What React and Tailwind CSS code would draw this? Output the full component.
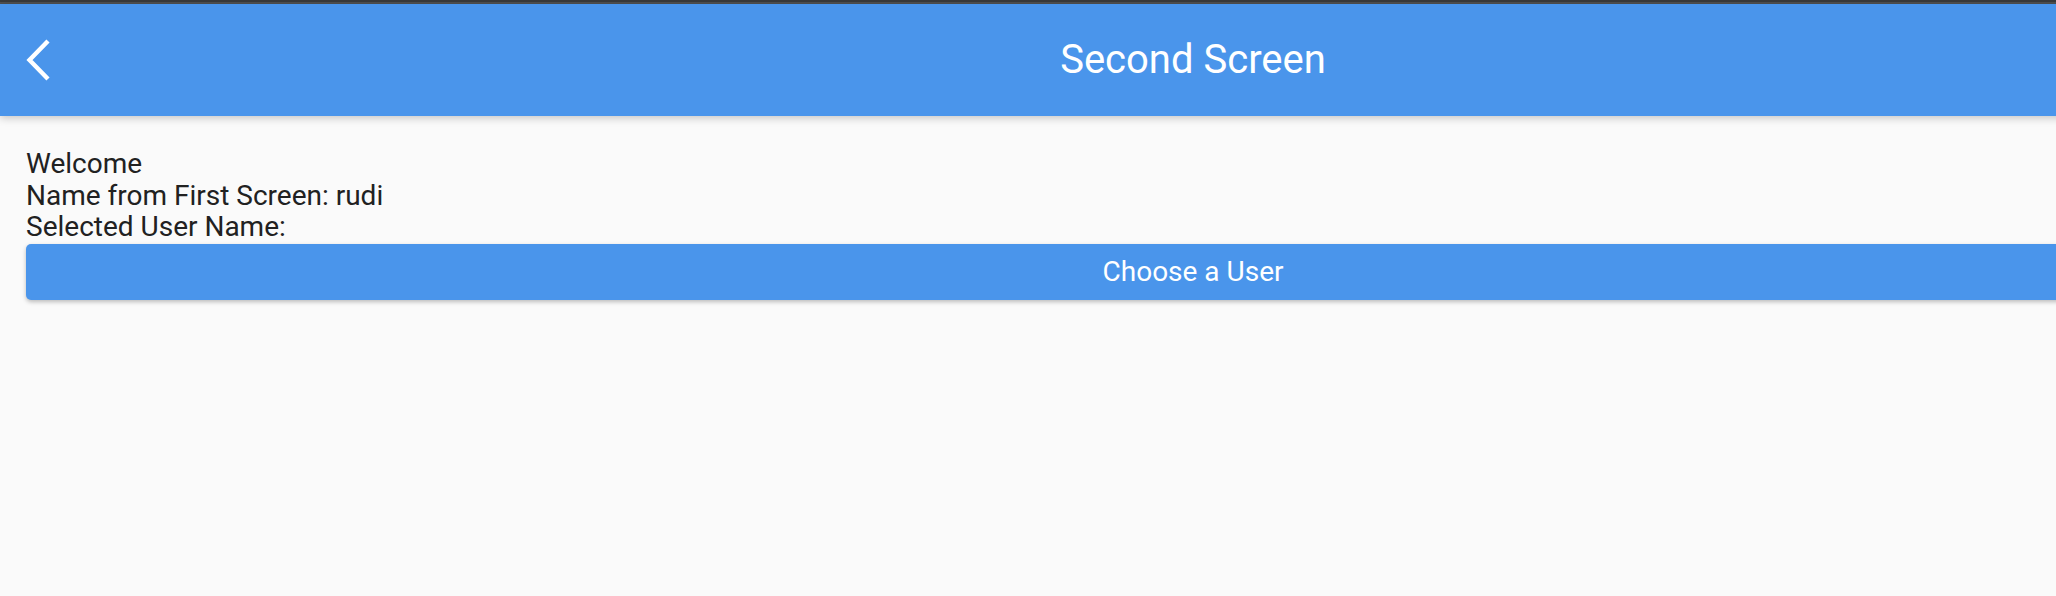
export default function App() {
    return (
        <div className="w-[2056px] h-[596px] overflow-hidden bg-[#fafafa] font-['Roboto',sans-serif]">
            {/* Window edge at the very top */}
            <div className="h-[2px] bg-[#3a3a3a]" />
            <div className="h-[2px] bg-[#505050]" />

            <div className="w-[2386px]">
                {/* App bar */}
                <header className="relative z-10 h-[112px] bg-[#4a95eb] flex items-center shadow-[0_2px_8px_rgba(0,0,0,0.22)]">
                    <button className="w-[80px] h-full flex items-center pl-[26px]">
                        <svg width="24" height="42" viewBox="0 0 24 42" fill="none">
                            <path d="M22 2 L3.5 21 L22 40" stroke="white" strokeWidth="4.4" strokeLinecap="butt" strokeLinejoin="miter" />
                        </svg>
                    </button>
                    <h1 className="flex-1 text-center text-white text-[40px] leading-none pr-[80px]">Second Screen</h1>
                </header>

                {/* Body */}
                <main className="pt-[32px] px-[26px]">
                    <div className="text-[#212121] text-[28px] leading-[31.6px]">
                        <p>Welcome</p>
                        <p>Name from First Screen: rudi</p>
                        <p>Selected User Name:</p>
                    </div>
                    <button className="mt-[1px] w-full h-[56px] rounded-[5px] bg-[#4a95eb] text-white text-[28px] shadow-[0_2px_4px_rgba(0,0,0,0.25)]">
                        Choose a User
                    </button>
                </main>
            </div>
        </div>
    );
}
